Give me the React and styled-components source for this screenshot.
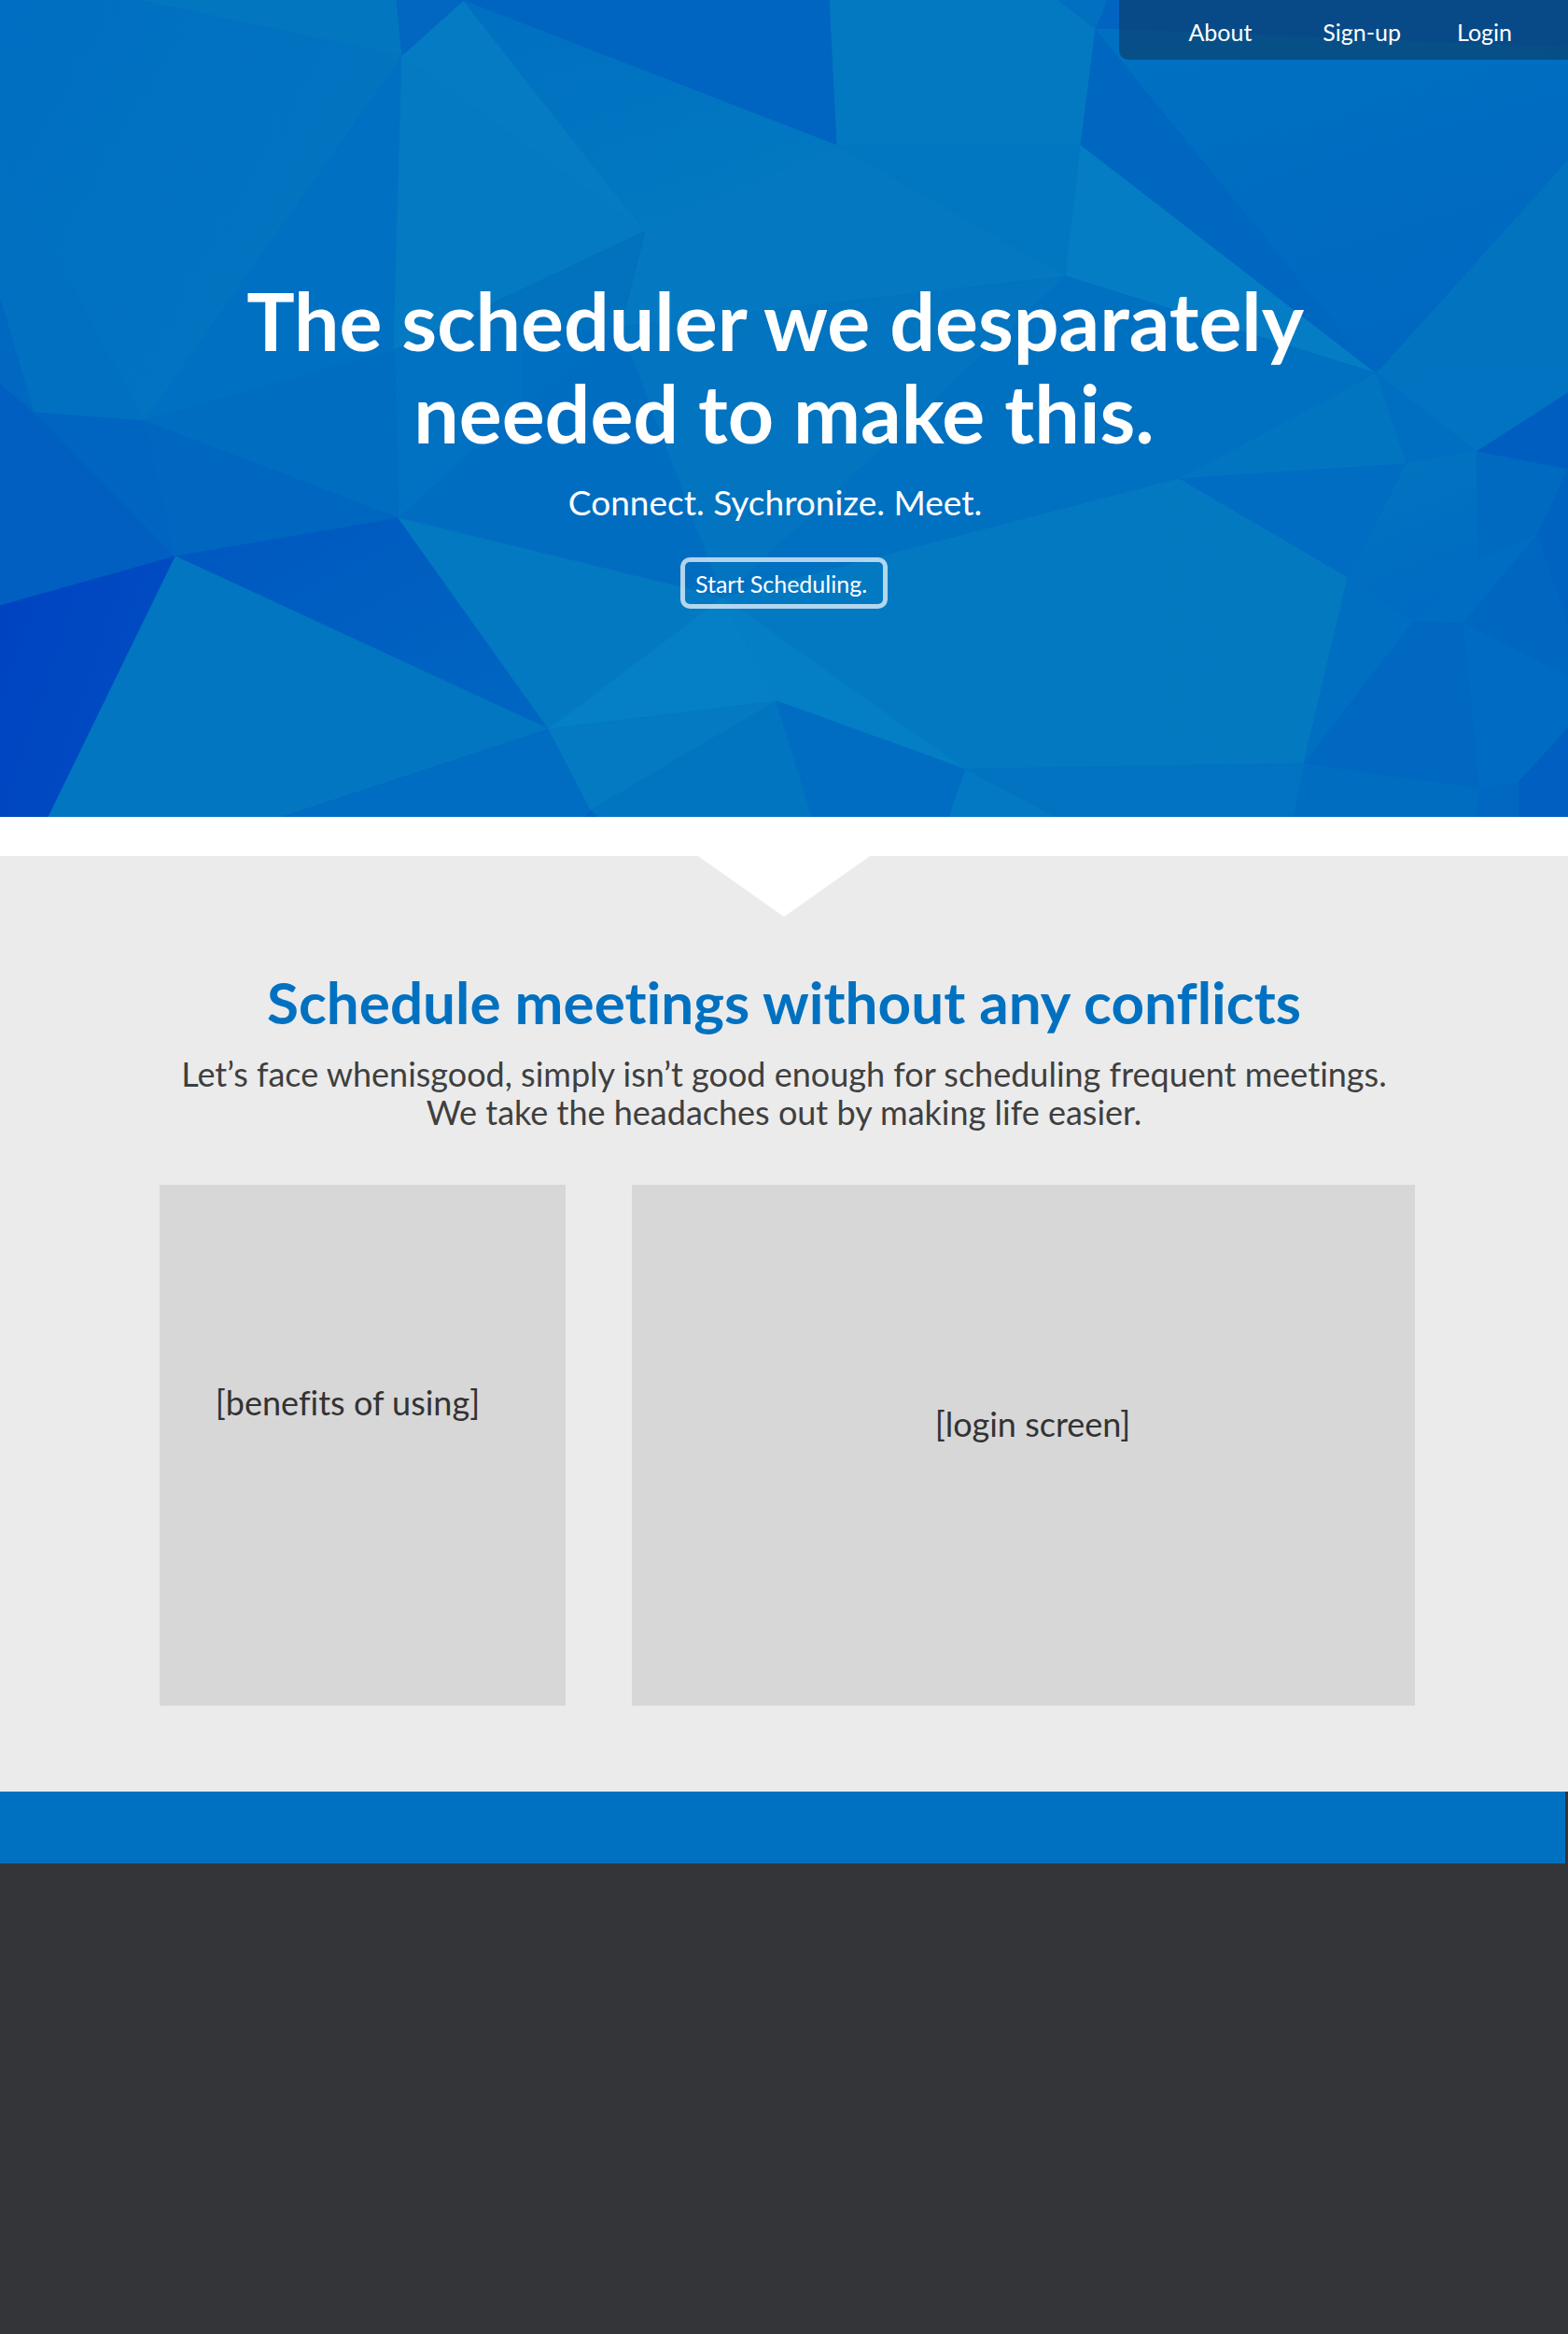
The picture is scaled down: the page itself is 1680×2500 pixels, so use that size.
import React from "react";
import styled, { createGlobalStyle } from "styled-components";

const GlobalStyle = createGlobalStyle`
  *, *::before, *::after { box-sizing: border-box; }
  html { background: #343539; }
  body {
    margin: 0;
    font-family: Lato, "Open Sans", sans-serif;
    font-variant-ligatures: none;
    color: #3f3f3f;
  }
`;

const Hero = styled.header`
  position: relative;
  display: flex;
  flex-direction: column;
  min-height: 875px;
  background: #0070c1;
  color: #fff;
`;

const Facets = styled.svg`
  position: absolute;
  inset: 0;
  width: 100%;
  height: 100%;
  stroke-width: 1;
  stroke-linejoin: round;
`;

const Nav = styled.nav`
  position: relative;
  align-self: flex-end;
  display: flex;
  align-items: center;
  gap: 60px;
  height: 64px;
  padding: 4px 60px 0 74px;
  border-bottom-left-radius: 10px;
  background: rgba(13, 47, 78, 0.5);
`;

const NavLink = styled.a`
  color: inherit;
  font-size: 25px;
  line-height: 30px;
  text-decoration: none;

  &:first-child {
    margin-right: 16px;
  }
`;

const Pitch = styled.div`
  position: relative;
  display: flex;
  flex-direction: column;
  align-items: center;
  padding: 229px 24px 0;
  text-align: center;
`;

const Title = styled.h1`
  margin: 0;
  font-size: 86px;
  font-weight: 700;
  line-height: 99px;
`;

const Tagline = styled.p`
  margin: 23px 0 35px;
  font-size: 37px;
  line-height: 48px;
`;

const StartButton = styled.button`
  height: 55px;
  padding: 0 17px 0 11px;
  border: 5px solid rgba(255, 255, 255, 0.7);
  border-radius: 10px;
  background: transparent;
  background-clip: padding-box;
  color: #fff;
  font-family: inherit;
  font-size: 25px;
  line-height: 30px;
  cursor: pointer;
`;

const Features = styled.main`
  margin-top: 42px;
  padding-bottom: 92px;
  background: #ebebeb;
`;

const Page = styled.div`
  background: #fff;
`;

const Notch = styled.div`
  width: 184px;
  height: 65px;
  margin: 0 auto;
  background: #fff;
  clip-path: polygon(0 0, 100% 0, 50% 100%);
`;

const Heading = styled.h2`
  margin: 53px 24px 0;
  color: #0071c1;
  font-size: 62px;
  font-weight: 700;
  line-height: 76px;
  text-align: center;
`;

const Lead = styled.p`
  margin: 19px 24px 57px;
  font-size: 36px;
  line-height: 41px;
  text-align: center;
`;

const Cards = styled.div`
  display: grid;
  grid-template-columns: 435fr 839fr;
  gap: 71px;
  padding: 0 164px 0 171px;
`;

const Card = styled.section`
  display: flex;
  align-items: center;
  justify-content: center;
  min-height: 558px;
  padding: ${(p) => p.$inset};
  background: #d7d7d7;
  color: #333;
  font-size: 36px;
  line-height: 41px;
`;

const FooterBar = styled.div`
  height: 77px;
  margin-right: 3px;
  background: #0071c1;
`;

const Footer = styled.footer`
  min-height: 581px;
  background: #343539;
`;

const facets = [
  ["#0071c1", "0,0 148,0 431,60 155,451 0,170"],
  ["#0277bf", "148,0 425,0 431,60"],
  ["#0167c0", "425,0 497,0 431,60"],
  ["#0064c1", "497,0 889,0 897,156"],
  ["#0379c1", "889,0 1134,0 1174,31 1158,155 897,156"],
  ["#0170c1", "1134,0 1187,0 1174,31"],
  ["#0164c1", "1187,0 1680,0 1680,51 1174,32"],
  ["url(#west)", "148,0 431,60 155,451 0,170 0,0"],
  ["#0070c2", "431,60 422,375 155,451"],
  ["#047bc2", "431,60 497,1 691,248 422,375"],
  ["#047ac2", "431,60 691,248 422,375"],
  ["url(#north)", "497,1 897,156 691,248"],
  ["#0479c2", "691,248 897,156 1158,155 1142,296 665,350"],
  ["#0277c1", "897,156 1158,155 1142,296"],
  ["#0271be", "691,248 665,350 422,375"],
  ["#006fc1", "422,375 665,350 427,555"],
  ["#0171c1", "422,375 560,360 560,432 427,555"],
  ["#006dc1", "665,350 775,640 427,555"],
  ["#0274c0", "665,350 1142,296 775,640"],
  ["#047dc4", "1158,155 1475,400 1142,296"],
  ["#0067c1", "1174,31 1475,400 1158,155"],
  ["url(#east)", "1174,31 1680,51 1680,172 1475,400"],
  ["#0274bf", "1475,400 1680,172 1680,382"],
  ["#0173c0", "1475,400 1680,382 1680,421 1582,484"],
  ["#0070c1", "1142,296 1475,400 1263,513 775,640"],
  ["#0275c0", "1475,400 1507,497 1263,513"],
  ["#006fc1", "1475,400 1582,484 1507,497"],
  ["#005ec1", "1680,421 1680,503 1582,484"],
  ["#006cc2", "1263,513 1507,497 1444,619"],
  ["url(#center)", "775,640 1263,513 1444,619 1397,818 1034,824"],
  ["url(#pillar)", "1507,497 1582,484 1584,600 1514,666 1444,619"],
  ["#006ac1", "1582,484 1680,503 1647,573 1584,600"],
  ["#006dc2", "1584,600 1647,573 1568,667 1514,666"],
  ["#0063c0", "1680,503 1680,672 1647,573"],
  ["#0067c1", "1647,573 1680,672 1680,725 1568,667"],
  ["#006fc2", "1444,619 1514,666 1397,818"],
  ["#0068c1", "1514,666 1568,667 1585,845 1397,818"],
  ["#006bc2", "1568,667 1680,725 1680,780 1627,838 1585,845"],
  ["#005fc1", "1680,780 1680,875 1627,875 1627,838"],
  ["#0168c1", "1585,845 1627,838 1627,875 1580,875"],
  ["#006dc1", "1397,818 1585,845 1580,875 1386,875"],
  ["#0173c0", "1034,824 1397,818 1386,875 1016,875"],
  ["#0379c3", "1034,824 1130,875 1016,875"],
  ["#0170c1", "0,170 155,451 36,442 0,320"],
  ["#0068c1", "0,320 36,442 0,412"],
  ["#005fc1", "0,412 36,442 188,596 0,649"],
  ["#0064c1", "36,442 155,451 188,596"],
  ["#006dc1", "155,451 422,375 427,555"],
  ["#0067c0", "155,451 427,555 188,596"],
  ["url(#corner)", "0,649 188,596 52,875 0,875"],
  ["url(#slope)", "188,596 427,555 588,781"],
  ["#0276c0", "188,596 588,781 303,875 52,875"],
  ["#006cc2", "588,781 633,868 627,875 303,875"],
  ["#0279c1", "427,555 775,640 588,781"],
  ["#0580c6", "775,640 832,751 588,781"],
  ["#047ec5", "775,640 1034,824 832,751"],
  ["#037ac2", "588,781 832,751 633,868"],
  ["#0275c0", "832,751 870,875 640,875 633,868"],
  ["#0065c1", "633,868 640,875 627,875"],
  ["#006dc2", "832,751 1034,824 1016,875 870,875"],
];

const gradients = [
  { id: "west", x1: 0, y1: 0, x2: 1, y2: 0.6, from: "#006ec2", to: "#0275bf" },
  { id: "north", x1: 0, y1: 0, x2: 0.5, y2: 1, from: "#006fc1", to: "#0279c1" },
  { id: "east", x1: 0, y1: 0, x2: 0.4, y2: 1, from: "#0071c1", to: "#0068c1" },
  { id: "center", x1: 0, y1: 0, x2: 1, y2: 0, from: "#0379c3", to: "#0379c0" },
  { id: "pillar", x1: 0, y1: 0, x2: 0.3, y2: 1, from: "#0275bf", to: "#006bc2" },
  { id: "corner", x1: 0, y1: 0, x2: 1, y2: 0.5, from: "#0042c2", to: "#004dc2" },
  { id: "slope", x1: 0, y1: 0, x2: 1, y2: 1, from: "#0057c0", to: "#0067c2" },
];

function Backdrop() {
  return (
    <Facets viewBox="0 0 1680 875" preserveAspectRatio="none" aria-hidden="true">
      <defs>
        {gradients.map((g) => (
          <linearGradient key={g.id} id={g.id} x1={g.x1} y1={g.y1} x2={g.x2} y2={g.y2}>
            <stop offset="0" stopColor={g.from} />
            <stop offset="1" stopColor={g.to} />
          </linearGradient>
        ))}
      </defs>
      {facets.map(([fill, points], i) => (
        <polygon key={i} points={points} fill={fill} stroke={fill} />
      ))}
    </Facets>
  );
}

export default function App() {
  return (
    <Page>
      <GlobalStyle />
      <Hero>
        <Backdrop />
        <Nav>
          <NavLink href="#about">About</NavLink>
          <NavLink href="#signup">Sign-up</NavLink>
          <NavLink href="#login">Login</NavLink>
        </Nav>
        <Pitch>
          <Title>
            The scheduler we desparately&nbsp;
            <br />
            needed to make this.
          </Title>
          <Tagline>Connect. Sychronize. Meet.&nbsp;&nbsp;</Tagline>
          <StartButton type="button">Start Scheduling.</StartButton>
        </Pitch>
      </Hero>
      <Features>
        <Notch />
        <Heading>Schedule meetings without any conflicts</Heading>
        <Lead>
          Let’s face whenisgood, simply isn’t good enough for scheduling frequent meetings.
          <br />
          We take the headaches out by making life easier.
        </Lead>
        <Cards>
          <Card $inset="0 32px 92px 0">[benefits of using]</Card>
          <Card $inset="0 0 46px 20px">[login screen]</Card>
        </Cards>
      </Features>
      <Footer>
        <FooterBar />
      </Footer>
    </Page>
  );
}
